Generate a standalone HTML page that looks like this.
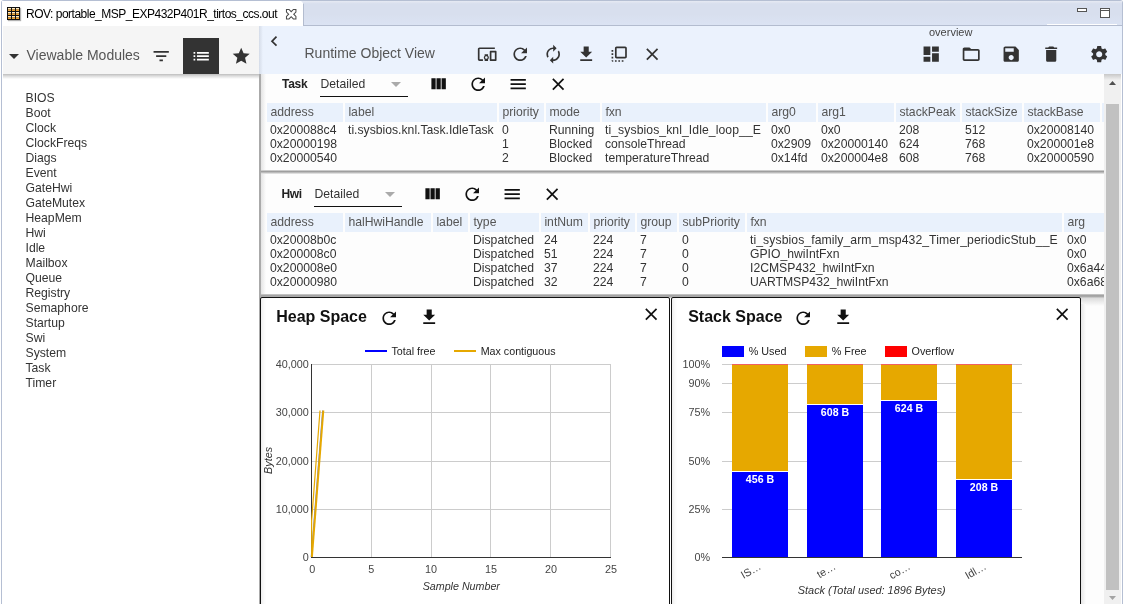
<!DOCTYPE html>
<html><head><meta charset="utf-8">
<style>
*{margin:0;padding:0;box-sizing:border-box}
html,body{width:1124px;height:604px;overflow:hidden;background:#fff;font-family:"Liberation Sans",sans-serif;color:#333}
.a{position:absolute}
.t{position:absolute;white-space:nowrap;line-height:1;-webkit-font-smoothing:antialiased}
body{filter:grayscale(0)}
svg{position:absolute;overflow:visible}
</style></head><body>
<div class="a" style="left:1px;top:0;width:1122px;height:604px;border-left:1px solid #b5bfd3;border-top:1px solid #b5bfd3;border-right:1px solid #b5bfd3;border-top-left-radius:3px;border-top-right-radius:3px"></div>
<div class="a" style="left:2px;top:1px;width:1120px;height:25px;background:linear-gradient(#e6eaf3,#d8dfee 12%,#d8dfee 55%,#dbe3f3);border-bottom:1px solid #b3bccf"></div>
<div class="a" style="left:1047px;top:24px;width:70px;height:1px;background:#fff"></div>
<div class="a" style="left:2px;top:1px;width:302px;height:25px;background:#fff;border-right:1px solid #b3bccf;clip-path:polygon(0 0,299px 0,302px 3px,302px 25px,0 25px)"></div>
<div class="a" style="left:7px;top:7px;width:13px;height:13px;background:#111;box-shadow:1px 1px 1px rgba(0,0,0,.3)"></div>
<svg style="left:7px;top:7px" width="13" height="13"><g><rect x="1" y="1" width="3" height="1.5" fill="#ffeec8"/><rect x="1" y="2.5" width="3" height="1.5" fill="#f3a633"/><rect x="5" y="1" width="3" height="1.5" fill="#ffeec8"/><rect x="5" y="2.5" width="3" height="1.5" fill="#f3a633"/><rect x="9" y="1" width="3" height="1.5" fill="#ffeec8"/><rect x="9" y="2.5" width="3" height="1.5" fill="#f3a633"/><rect x="1" y="5" width="3" height="1.5" fill="#ffeec8"/><rect x="1" y="6.5" width="3" height="1.5" fill="#f3a633"/><rect x="5" y="5" width="3" height="1.5" fill="#ffeec8"/><rect x="5" y="6.5" width="3" height="1.5" fill="#f3a633"/><rect x="9" y="5" width="3" height="1.5" fill="#ffeec8"/><rect x="9" y="6.5" width="3" height="1.5" fill="#f3a633"/><rect x="1" y="9" width="3" height="1.5" fill="#ffeec8"/><rect x="1" y="10.5" width="3" height="1.5" fill="#f3a633"/><rect x="5" y="9" width="3" height="1.5" fill="#ffeec8"/><rect x="5" y="10.5" width="3" height="1.5" fill="#f3a633"/><rect x="9" y="9" width="3" height="1.5" fill="#ffeec8"/><rect x="9" y="10.5" width="3" height="1.5" fill="#f3a633"/></g></svg>
<div class="t" style="left:26px;top:8.02px;font-size:12px;color:#000;font-weight:normal;font-style:normal;letter-spacing:-0.5px">ROV: portable_MSP_EXP432P401R_tirtos_ccs.out</div>
<svg style="left:285.8px;top:8.8px" width="10.4" height="10.4" viewBox="0 0 11 11"><path d="M0.5 0.5H3.2L5.5 2.8L7.8 0.5H10.5V3.2L8.2 5.5L10.5 7.8V10.5H7.8L5.5 8.2L3.2 10.5H0.5V7.8L2.8 5.5L0.5 3.2Z" fill="none" stroke="#4a4a4a" stroke-width="1.1"/></svg>
<div class="a" style="left:1077px;top:8px;width:10px;height:4px;border:1px solid #555;background:#fff"></div>
<div class="a" style="left:1100px;top:8px;width:10px;height:10px;border:1px solid #555;background:#fff"></div>
<div class="a" style="left:1101px;top:10px;width:8px;height:1px;background:#555"></div>
<div class="a" style="left:3px;top:26px;width:256px;height:48px;background:#f5f5f5"></div>
<div class="a" style="left:3px;top:74px;width:256px;height:5px;background:linear-gradient(#bdbdbd,#dcdcdc 40%,#fff)"></div>
<svg style="left:9px;top:54px" width="10" height="5"><path d="M0 0H10L5 5Z" fill="#333"/></svg>
<div class="t" style="left:26.5px;top:48.02px;font-size:14px;color:#555;font-weight:normal;font-style:normal;">Viewable Modules</div>
<svg style="left:150.80px;top:45.80px" width="20.4" height="20.4" viewBox="0 0 24 24"><path fill="#333" d="M10 18h4v-2h-4v2zM3 6v2h18V6H3zm3 7h12v-2H6v2z"/></svg>
<div class="a" style="left:183px;top:38px;width:36px;height:36px;background:#333"></div>
<svg style="left:190.80px;top:45.80px" width="20.4" height="20.4" viewBox="0 0 24 24"><path fill="#fff" d="M3 13h2v-2H3v2zm0 4h2v-2H3v2zm0-8h2V7H3v2zm4 4h14v-2H7v2zm0 4h14v-2H7v2zM7 7v2h14V7H7z"/></svg>
<svg style="left:230.80px;top:45.80px" width="20.4" height="20.4" viewBox="0 0 24 24"><path fill="#333" d="M12 17.27L18.18 21l-1.64-7.03L22 9.24l-7.19-.61L12 2 9.19 8.63 2 9.24l5.46 4.73L5.82 21z"/></svg>
<div class="t" style="left:25.5px;top:91.92px;font-size:12.2px;color:#333;font-weight:normal;font-style:normal;">BIOS</div>
<div class="t" style="left:25.5px;top:106.92px;font-size:12.2px;color:#333;font-weight:normal;font-style:normal;">Boot</div>
<div class="t" style="left:25.5px;top:121.92px;font-size:12.2px;color:#333;font-weight:normal;font-style:normal;">Clock</div>
<div class="t" style="left:25.5px;top:136.92px;font-size:12.2px;color:#333;font-weight:normal;font-style:normal;">ClockFreqs</div>
<div class="t" style="left:25.5px;top:151.92px;font-size:12.2px;color:#333;font-weight:normal;font-style:normal;">Diags</div>
<div class="t" style="left:25.5px;top:166.92px;font-size:12.2px;color:#333;font-weight:normal;font-style:normal;">Event</div>
<div class="t" style="left:25.5px;top:181.92px;font-size:12.2px;color:#333;font-weight:normal;font-style:normal;">GateHwi</div>
<div class="t" style="left:25.5px;top:196.92px;font-size:12.2px;color:#333;font-weight:normal;font-style:normal;">GateMutex</div>
<div class="t" style="left:25.5px;top:211.92px;font-size:12.2px;color:#333;font-weight:normal;font-style:normal;">HeapMem</div>
<div class="t" style="left:25.5px;top:226.92px;font-size:12.2px;color:#333;font-weight:normal;font-style:normal;">Hwi</div>
<div class="t" style="left:25.5px;top:241.92px;font-size:12.2px;color:#333;font-weight:normal;font-style:normal;">Idle</div>
<div class="t" style="left:25.5px;top:256.92px;font-size:12.2px;color:#333;font-weight:normal;font-style:normal;">Mailbox</div>
<div class="t" style="left:25.5px;top:271.92px;font-size:12.2px;color:#333;font-weight:normal;font-style:normal;">Queue</div>
<div class="t" style="left:25.5px;top:286.92px;font-size:12.2px;color:#333;font-weight:normal;font-style:normal;">Registry</div>
<div class="t" style="left:25.5px;top:301.92px;font-size:12.2px;color:#333;font-weight:normal;font-style:normal;">Semaphore</div>
<div class="t" style="left:25.5px;top:316.92px;font-size:12.2px;color:#333;font-weight:normal;font-style:normal;">Startup</div>
<div class="t" style="left:25.5px;top:331.92px;font-size:12.2px;color:#333;font-weight:normal;font-style:normal;">Swi</div>
<div class="t" style="left:25.5px;top:346.92px;font-size:12.2px;color:#333;font-weight:normal;font-style:normal;">System</div>
<div class="t" style="left:25.5px;top:361.92px;font-size:12.2px;color:#333;font-weight:normal;font-style:normal;">Task</div>
<div class="t" style="left:25.5px;top:376.92px;font-size:12.2px;color:#333;font-weight:normal;font-style:normal;">Timer</div>
<div class="a" style="left:259px;top:26px;width:863px;height:48px;background:#ebf2fd"></div>
<div class="a" style="left:259px;top:26px;width:4px;height:48px;background:linear-gradient(90deg,#d5dce8,#ebf2fd)"></div>
<div class="a" style="left:263px;top:74px;width:841px;height:530px;background:#fdfdfd"></div>
<div class="a" style="left:259px;top:74px;width:2px;height:530px;background:#aaa"></div>
<div class="a" style="left:261px;top:74px;width:5px;height:530px;background:linear-gradient(90deg,#e4e4e4,#fdfdfd)"></div>
<svg style="left:264.10px;top:31.00px" width="20.4" height="20.4" viewBox="0 0 24 24"><path fill="#333" d="M15.41 7.41L14 6l-6 6 6 6 1.41-1.41L10.83 12z"/></svg>
<div class="t" style="left:304.5px;top:46.02px;font-size:14px;color:#555;font-weight:normal;font-style:normal;">Runtime Object View</div>
<svg style="left:476.70px;top:43.70px" width="20.4" height="20.4" viewBox="0 0 24 24"><path fill="#333" d="M3 6h18V4H3c-1.1 0-2 .9-2 2v12c0 1.1.9 2 2 2h4v-2H3V6zm10 6H9v1.78c-.61.55-1 1.33-1 2.22s.39 1.67 1 2.22V20h4v-1.78c.61-.55 1-1.34 1-2.22s-.39-1.67-1-2.22V12zm-2 5.5c-.83 0-1.5-.67-1.5-1.5s.67-1.5 1.5-1.5 1.5.67 1.5 1.5-.67 1.5-1.5 1.5zM22 8h-6c-.5 0-1 .5-1 1v10c0 .5.5 1 1 1h6c.5 0 1-.5 1-1V9c0-.5-.5-1-1-1zm-1 10h-4v-8h4v8z"/></svg>
<svg style="left:509.80px;top:43.70px" width="20.4" height="20.4" viewBox="0 0 24 24"><path fill="#333" d="M17.65 6.35C16.2 4.9 14.21 4 12 4c-4.42 0-7.99 3.58-7.99 8s3.57 8 7.99 8c3.73 0 6.84-2.55 7.73-6h-2.08c-.82 2.33-3.04 4-5.65 4-3.31 0-6-2.69-6-6s2.69-6 6-6c1.66 0 3.14.69 4.22 1.78L13 11h7V4l-2.35 2.35z"/></svg>
<svg style="left:542.80px;top:43.70px" width="20.4" height="20.4" viewBox="0 0 24 24"><path fill="#333" d="M12 6v3l4-4-4-4v3c-4.42 0-8 3.58-8 8 0 1.57.46 3.03 1.24 4.26L6.7 14.8c-.45-.83-.7-1.79-.7-2.8 0-3.31 2.69-6 6-6zm6.76 1.74L17.3 9.2c.44.84.7 1.79.7 2.8 0 3.31-2.69 6-6 6v-3l-4 4 4 4v-3c4.42 0 8-3.58 8-8 0-1.57-.46-3.03-1.24-4.26z"/></svg>
<svg style="left:575.80px;top:43.70px" width="20.4" height="20.4" viewBox="0 0 24 24"><path fill="#333" d="M19 9h-4V3H9v6H5l7 7 7-7zM5 18v2h14v-2H5z"/></svg>
<svg style="left:608.80px;top:43.70px" width="20.4" height="20.4" viewBox="0 0 24 24"><path fill="#333" d="M3 13h2v-2H3v2zm0 4h2v-2H3v2zm2 4v-2H3c0 1.1.89 2 2 2zM3 9h2V7H3v2zm12 12h2v-2h-2v2zm4-18H9c-1.11 0-2 .9-2 2v10c0 1.1.89 2 2 2h10c1.1 0 2-.9 2-2V5c0-1.1-.9-2-2-2zm0 12H9V5h10v10zm-8 6h2v-2h-2v2zm-4 0h2v-2H7v2z"/></svg>
<svg style="left:641.70px;top:43.70px" width="20.4" height="20.4" viewBox="0 0 24 24"><path fill="#333" d="M19 6.41L17.59 5 12 10.59 6.41 5 5 6.41 10.59 12 5 17.59 6.41 19 12 13.41 17.59 19 19 17.59 13.41 12z"/></svg>
<div class="t" style="left:929px;top:26.52px;font-size:11px;color:#444;font-weight:normal;font-style:normal;">overview</div>
<svg style="left:920.80px;top:43.70px" width="20.4" height="20.4" viewBox="0 0 24 24"><path fill="#333" d="M3 13h8V3H3v10zm0 8h8v-6H3v6zm10 0h8V11h-8v10zm0-18v6h8V3h-8z"/></svg>
<svg style="left:960.50px;top:43.70px" width="20.4" height="20.4" viewBox="0 0 24 24"><path fill="#333" d="M20 6h-8l-2-2H4c-1.1 0-1.99.9-1.99 2L2 18c0 1.1.9 2 2 2h16c1.1 0 2-.9 2-2V8c0-1.1-.9-2-2-2zm0 12H4V8h16v10z"/></svg>
<svg style="left:1000.80px;top:43.70px" width="20.4" height="20.4" viewBox="0 0 24 24"><path fill="#333" d="M17 3H5c-1.11 0-2 .9-2 2v14c0 1.1.89 2 2 2h14c1.1 0 2-.9 2-2V7l-4-4zm-5 16c-1.66 0-3-1.34-3-3s1.34-3 3-3 3 1.34 3 3-1.34 3-3 3zm3-10H5V5h10v4z"/></svg>
<svg style="left:1040.90px;top:43.70px" width="20.4" height="20.4" viewBox="0 0 24 24"><path fill="#333" d="M6 19c0 1.1.9 2 2 2h8c1.1 0 2-.9 2-2V7H6v12zM19 4h-3.5l-1-1h-5l-1 1H5v2h14V4z"/></svg>
<svg style="left:1088.60px;top:43.70px" width="20.4" height="20.4" viewBox="0 0 24 24"><path fill="#333" d="M19.14 12.94c.04-.3.06-.61.06-.94 0-.32-.02-.64-.07-.94l2.03-1.58c.18-.14.23-.41.12-.61l-1.92-3.32c-.12-.22-.37-.29-.59-.22l-2.39.96c-.5-.38-1.03-.7-1.62-.94l-.36-2.54c-.04-.24-.24-.41-.48-.41h-3.84c-.24 0-.43.17-.47.41l-.36 2.54c-.59.24-1.13.57-1.62.94l-2.39-.96c-.22-.08-.47 0-.59.22L2.74 8.87c-.12.21-.08.47.12.61l2.03 1.58c-.05.3-.09.63-.09.94s.02.64.07.94l-2.03 1.58c-.18.14-.23.41-.12.61l1.92 3.32c.12.22.37.29.59.22l2.39-.96c.5.38 1.03.7 1.62.94l.36 2.54c.05.24.24.41.48.41h3.84c.24 0 .44-.17.47-.41l.36-2.54c.59-.24 1.13-.56 1.62-.94l2.39.96c.22.08.47 0 .59-.22l1.92-3.32c.12-.22.07-.47-.12-.61l-2.01-1.58zM12 15.6c-1.98 0-3.6-1.62-3.6-3.6s1.62-3.6 3.6-3.6 3.6 1.62 3.6 3.6-1.62 3.6-3.6 3.6z"/></svg>
<div class="a" style="left:261px;top:74px;width:843px;height:530px;overflow:hidden">
<div class="t" style="left:21px;top:4.02px;font-size:12px;color:#222;font-weight:bold;font-style:normal;letter-spacing:-0.3px">Task</div>
<div class="t" style="left:59.5px;top:3.92px;font-size:12.2px;color:#333;font-weight:normal;font-style:normal;">Detailed</div>
<svg style="left:130.39999999999998px;top:8px" width="10" height="5"><path d="M0 0H10L5 5Z" fill="#aaa"/></svg>
<div class="a" style="left:59px;top:21.5px;width:88px;height:1.3px;background:#111"></div>
<svg style="left:167.10px;top:-0.40px" width="20.4" height="20.4" viewBox="0 0 24 24"><path fill="#111" d="M10 18h5V5h-5v13zm-6 0h5V5H4v13zM16 5v13h5V5h-5z"/></svg>
<svg style="left:206.90px;top:-0.40px" width="20.4" height="20.4" viewBox="0 0 24 24"><path fill="#111" d="M17.65 6.35C16.2 4.9 14.21 4 12 4c-4.42 0-7.99 3.58-7.99 8s3.57 8 7.99 8c3.73 0 6.84-2.55 7.73-6h-2.08c-.82 2.33-3.04 4-5.65 4-3.31 0-6-2.69-6-6s2.69-6 6-6c1.66 0 3.14.69 4.22 1.78L13 11h7V4l-2.35 2.35z"/></svg>
<svg style="left:246.70px;top:-0.40px" width="20.4" height="20.4" viewBox="0 0 24 24"><path fill="#111" d="M3 18h18v-2H3v2zm0-5h18v-2H3v2zm0-7v2h18V6H3z"/></svg>
<svg style="left:286.70px;top:-0.40px" width="20.4" height="20.4" viewBox="0 0 24 24"><path fill="#111" d="M19 6.41L17.59 5 12 10.59 6.41 5 5 6.41 10.59 12 5 17.59 6.41 19 12 13.41 17.59 19 19 17.59 13.41 12z"/></svg>
<div class="a" style="left:6px;top:29px;width:76px;height:19px;background:#e9f1fc"></div>
<div class="t" style="left:9.399999999999977px;top:31.92px;font-size:12.2px;color:#555;font-weight:normal;font-style:normal;">address</div>
<div class="a" style="left:84px;top:29px;width:152px;height:19px;background:#e9f1fc"></div>
<div class="t" style="left:87.39999999999998px;top:31.92px;font-size:12.2px;color:#555;font-weight:normal;font-style:normal;">label</div>
<div class="a" style="left:238px;top:29px;width:45px;height:19px;background:#e9f1fc"></div>
<div class="t" style="left:241.39999999999998px;top:31.92px;font-size:12.2px;color:#555;font-weight:normal;font-style:normal;">priority</div>
<div class="a" style="left:285px;top:29px;width:54px;height:19px;background:#e9f1fc"></div>
<div class="t" style="left:288.4px;top:31.92px;font-size:12.2px;color:#555;font-weight:normal;font-style:normal;">mode</div>
<div class="a" style="left:341px;top:29px;width:164px;height:19px;background:#e9f1fc"></div>
<div class="t" style="left:344.4px;top:31.92px;font-size:12.2px;color:#555;font-weight:normal;font-style:normal;">fxn</div>
<div class="a" style="left:507px;top:29px;width:48px;height:19px;background:#e9f1fc"></div>
<div class="t" style="left:510.4px;top:31.92px;font-size:12.2px;color:#555;font-weight:normal;font-style:normal;">arg0</div>
<div class="a" style="left:557px;top:29px;width:76px;height:19px;background:#e9f1fc"></div>
<div class="t" style="left:560.4px;top:31.92px;font-size:12.2px;color:#555;font-weight:normal;font-style:normal;">arg1</div>
<div class="a" style="left:635px;top:29px;width:64px;height:19px;background:#e9f1fc"></div>
<div class="t" style="left:638.4px;top:31.92px;font-size:12.2px;color:#555;font-weight:normal;font-style:normal;">stackPeak</div>
<div class="a" style="left:701px;top:29px;width:60px;height:19px;background:#e9f1fc"></div>
<div class="t" style="left:704.4px;top:31.92px;font-size:12.2px;color:#555;font-weight:normal;font-style:normal;">stackSize</div>
<div class="a" style="left:763px;top:29px;width:76px;height:19px;background:#e9f1fc"></div>
<div class="t" style="left:766.4000000000001px;top:31.92px;font-size:12.2px;color:#555;font-weight:normal;font-style:normal;">stackBase</div>
<div class="a" style="left:841px;top:29px;width:58px;height:19px;background:#e9f1fc"></div>
<div class="t" style="left:844.4000000000001px;top:31.92px;font-size:12.2px;color:#555;font-weight:normal;font-style:normal;"></div>
<div class="t" style="left:9px;top:49.92px;font-size:12.2px;color:#333;font-weight:normal;font-style:normal;">0x200088c4</div>
<div class="t" style="left:87px;top:49.92px;font-size:12.2px;color:#333;font-weight:normal;font-style:normal;">ti.sysbios.knl.Task.IdleTask</div>
<div class="t" style="left:241px;top:49.92px;font-size:12.2px;color:#333;font-weight:normal;font-style:normal;">0</div>
<div class="t" style="left:288px;top:49.92px;font-size:12.2px;color:#333;font-weight:normal;font-style:normal;">Running</div>
<div class="t" style="left:344px;top:49.92px;font-size:12.2px;color:#333;font-weight:normal;font-style:normal;letter-spacing:0.08px">ti_sysbios_knl_Idle_loop__E</div>
<div class="t" style="left:510px;top:49.92px;font-size:12.2px;color:#333;font-weight:normal;font-style:normal;">0x0</div>
<div class="t" style="left:560px;top:49.92px;font-size:12.2px;color:#333;font-weight:normal;font-style:normal;">0x0</div>
<div class="t" style="left:638px;top:49.92px;font-size:12.2px;color:#333;font-weight:normal;font-style:normal;">208</div>
<div class="t" style="left:704px;top:49.92px;font-size:12.2px;color:#333;font-weight:normal;font-style:normal;">512</div>
<div class="t" style="left:766px;top:49.92px;font-size:12.2px;color:#333;font-weight:normal;font-style:normal;">0x20008140</div>
<div class="t" style="left:9px;top:63.92px;font-size:12.2px;color:#333;font-weight:normal;font-style:normal;">0x20000198</div>
<div class="t" style="left:241px;top:63.92px;font-size:12.2px;color:#333;font-weight:normal;font-style:normal;">1</div>
<div class="t" style="left:288px;top:63.92px;font-size:12.2px;color:#333;font-weight:normal;font-style:normal;">Blocked</div>
<div class="t" style="left:344px;top:63.92px;font-size:12.2px;color:#333;font-weight:normal;font-style:normal;">consoleThread</div>
<div class="t" style="left:510px;top:63.92px;font-size:12.2px;color:#333;font-weight:normal;font-style:normal;">0x2909</div>
<div class="t" style="left:560px;top:63.92px;font-size:12.2px;color:#333;font-weight:normal;font-style:normal;">0x20000140</div>
<div class="t" style="left:638px;top:63.92px;font-size:12.2px;color:#333;font-weight:normal;font-style:normal;">624</div>
<div class="t" style="left:704px;top:63.92px;font-size:12.2px;color:#333;font-weight:normal;font-style:normal;">768</div>
<div class="t" style="left:766px;top:63.92px;font-size:12.2px;color:#333;font-weight:normal;font-style:normal;">0x200001e8</div>
<div class="t" style="left:9px;top:77.92px;font-size:12.2px;color:#333;font-weight:normal;font-style:normal;">0x20000540</div>
<div class="t" style="left:241px;top:77.92px;font-size:12.2px;color:#333;font-weight:normal;font-style:normal;">2</div>
<div class="t" style="left:288px;top:77.92px;font-size:12.2px;color:#333;font-weight:normal;font-style:normal;">Blocked</div>
<div class="t" style="left:344px;top:77.92px;font-size:12.2px;color:#333;font-weight:normal;font-style:normal;">temperatureThread</div>
<div class="t" style="left:510px;top:77.92px;font-size:12.2px;color:#333;font-weight:normal;font-style:normal;">0x14fd</div>
<div class="t" style="left:560px;top:77.92px;font-size:12.2px;color:#333;font-weight:normal;font-style:normal;">0x200004e8</div>
<div class="t" style="left:638px;top:77.92px;font-size:12.2px;color:#333;font-weight:normal;font-style:normal;">608</div>
<div class="t" style="left:704px;top:77.92px;font-size:12.2px;color:#333;font-weight:normal;font-style:normal;">768</div>
<div class="t" style="left:766px;top:77.92px;font-size:12.2px;color:#333;font-weight:normal;font-style:normal;">0x20000590</div>
<div class="a" style="left:0px;top:96px;width:843px;height:4px;background:linear-gradient(#e0e0e0,#9a9a9a 40%,#b8b8b8 60%,#f0f0f0)"></div>
<div class="t" style="left:20.399999999999977px;top:114.02px;font-size:12px;color:#222;font-weight:bold;font-style:normal;letter-spacing:-0.3px">Hwi</div>
<div class="t" style="left:53.5px;top:113.92px;font-size:12.2px;color:#333;font-weight:normal;font-style:normal;">Detailed</div>
<svg style="left:124.39999999999998px;top:118px" width="10" height="5"><path d="M0 0H10L5 5Z" fill="#aaa"/></svg>
<div class="a" style="left:53px;top:131.5px;width:88px;height:1.3px;background:#111"></div>
<svg style="left:161.10px;top:109.60px" width="20.4" height="20.4" viewBox="0 0 24 24"><path fill="#111" d="M10 18h5V5h-5v13zm-6 0h5V5H4v13zM16 5v13h5V5h-5z"/></svg>
<svg style="left:200.90px;top:109.60px" width="20.4" height="20.4" viewBox="0 0 24 24"><path fill="#111" d="M17.65 6.35C16.2 4.9 14.21 4 12 4c-4.42 0-7.99 3.58-7.99 8s3.57 8 7.99 8c3.73 0 6.84-2.55 7.73-6h-2.08c-.82 2.33-3.04 4-5.65 4-3.31 0-6-2.69-6-6s2.69-6 6-6c1.66 0 3.14.69 4.22 1.78L13 11h7V4l-2.35 2.35z"/></svg>
<svg style="left:240.70px;top:109.60px" width="20.4" height="20.4" viewBox="0 0 24 24"><path fill="#111" d="M3 18h18v-2H3v2zm0-5h18v-2H3v2zm0-7v2h18V6H3z"/></svg>
<svg style="left:280.70px;top:109.60px" width="20.4" height="20.4" viewBox="0 0 24 24"><path fill="#111" d="M19 6.41L17.59 5 12 10.59 6.41 5 5 6.41 10.59 12 5 17.59 6.41 19 12 13.41 17.59 19 19 17.59 13.41 12z"/></svg>
<div class="a" style="left:6px;top:139px;width:76px;height:19px;background:#e9f1fc"></div>
<div class="t" style="left:9.399999999999977px;top:141.92px;font-size:12.2px;color:#555;font-weight:normal;font-style:normal;">address</div>
<div class="a" style="left:84px;top:139px;width:86px;height:19px;background:#e9f1fc"></div>
<div class="t" style="left:87.39999999999998px;top:141.92px;font-size:12.2px;color:#555;font-weight:normal;font-style:normal;">halHwiHandle</div>
<div class="a" style="left:172px;top:139px;width:35px;height:19px;background:#e9f1fc"></div>
<div class="t" style="left:175.39999999999998px;top:141.92px;font-size:12.2px;color:#555;font-weight:normal;font-style:normal;">label</div>
<div class="a" style="left:209px;top:139px;width:69px;height:19px;background:#e9f1fc"></div>
<div class="t" style="left:212.39999999999998px;top:141.92px;font-size:12.2px;color:#555;font-weight:normal;font-style:normal;">type</div>
<div class="a" style="left:280px;top:139px;width:47px;height:19px;background:#e9f1fc"></div>
<div class="t" style="left:283.4px;top:141.92px;font-size:12.2px;color:#555;font-weight:normal;font-style:normal;">intNum</div>
<div class="a" style="left:329px;top:139px;width:45px;height:19px;background:#e9f1fc"></div>
<div class="t" style="left:332.4px;top:141.92px;font-size:12.2px;color:#555;font-weight:normal;font-style:normal;">priority</div>
<div class="a" style="left:376px;top:139px;width:40px;height:19px;background:#e9f1fc"></div>
<div class="t" style="left:379.4px;top:141.92px;font-size:12.2px;color:#555;font-weight:normal;font-style:normal;">group</div>
<div class="a" style="left:418px;top:139px;width:66px;height:19px;background:#e9f1fc"></div>
<div class="t" style="left:421.4px;top:141.92px;font-size:12.2px;color:#555;font-weight:normal;font-style:normal;">subPriority</div>
<div class="a" style="left:486px;top:139px;width:315px;height:19px;background:#e9f1fc"></div>
<div class="t" style="left:489.4px;top:141.92px;font-size:12.2px;color:#555;font-weight:normal;font-style:normal;">fxn</div>
<div class="a" style="left:803px;top:139px;width:96px;height:19px;background:#e9f1fc"></div>
<div class="t" style="left:806.4000000000001px;top:141.92px;font-size:12.2px;color:#555;font-weight:normal;font-style:normal;">arg</div>
<div class="t" style="left:9px;top:159.92px;font-size:12.2px;color:#333;font-weight:normal;font-style:normal;">0x20008b0c</div>
<div class="t" style="left:212px;top:159.92px;font-size:12.2px;color:#333;font-weight:normal;font-style:normal;">Dispatched</div>
<div class="t" style="left:283px;top:159.92px;font-size:12.2px;color:#333;font-weight:normal;font-style:normal;">24</div>
<div class="t" style="left:332px;top:159.92px;font-size:12.2px;color:#333;font-weight:normal;font-style:normal;">224</div>
<div class="t" style="left:379px;top:159.92px;font-size:12.2px;color:#333;font-weight:normal;font-style:normal;">7</div>
<div class="t" style="left:421px;top:159.92px;font-size:12.2px;color:#333;font-weight:normal;font-style:normal;">0</div>
<div class="t" style="left:489px;top:159.92px;font-size:12.2px;color:#333;font-weight:normal;font-style:normal;letter-spacing:0.08px">ti_sysbios_family_arm_msp432_Timer_periodicStub__E</div>
<div class="t" style="left:806px;top:159.92px;font-size:12.2px;color:#333;font-weight:normal;font-style:normal;">0x0</div>
<div class="t" style="left:9px;top:173.92px;font-size:12.2px;color:#333;font-weight:normal;font-style:normal;">0x200008c0</div>
<div class="t" style="left:212px;top:173.92px;font-size:12.2px;color:#333;font-weight:normal;font-style:normal;">Dispatched</div>
<div class="t" style="left:283px;top:173.92px;font-size:12.2px;color:#333;font-weight:normal;font-style:normal;">51</div>
<div class="t" style="left:332px;top:173.92px;font-size:12.2px;color:#333;font-weight:normal;font-style:normal;">224</div>
<div class="t" style="left:379px;top:173.92px;font-size:12.2px;color:#333;font-weight:normal;font-style:normal;">7</div>
<div class="t" style="left:421px;top:173.92px;font-size:12.2px;color:#333;font-weight:normal;font-style:normal;">0</div>
<div class="t" style="left:489px;top:173.92px;font-size:12.2px;color:#333;font-weight:normal;font-style:normal;">GPIO_hwiIntFxn</div>
<div class="t" style="left:806px;top:173.92px;font-size:12.2px;color:#333;font-weight:normal;font-style:normal;">0x0</div>
<div class="t" style="left:9px;top:187.92px;font-size:12.2px;color:#333;font-weight:normal;font-style:normal;">0x200008e0</div>
<div class="t" style="left:212px;top:187.92px;font-size:12.2px;color:#333;font-weight:normal;font-style:normal;">Dispatched</div>
<div class="t" style="left:283px;top:187.92px;font-size:12.2px;color:#333;font-weight:normal;font-style:normal;">37</div>
<div class="t" style="left:332px;top:187.92px;font-size:12.2px;color:#333;font-weight:normal;font-style:normal;">224</div>
<div class="t" style="left:379px;top:187.92px;font-size:12.2px;color:#333;font-weight:normal;font-style:normal;">7</div>
<div class="t" style="left:421px;top:187.92px;font-size:12.2px;color:#333;font-weight:normal;font-style:normal;">0</div>
<div class="t" style="left:489px;top:187.92px;font-size:12.2px;color:#333;font-weight:normal;font-style:normal;">I2CMSP432_hwiIntFxn</div>
<div class="t" style="left:806px;top:187.92px;font-size:12.2px;color:#333;font-weight:normal;font-style:normal;">0x6a44c</div>
<div class="t" style="left:9px;top:201.92px;font-size:12.2px;color:#333;font-weight:normal;font-style:normal;">0x20000980</div>
<div class="t" style="left:212px;top:201.92px;font-size:12.2px;color:#333;font-weight:normal;font-style:normal;">Dispatched</div>
<div class="t" style="left:283px;top:201.92px;font-size:12.2px;color:#333;font-weight:normal;font-style:normal;">32</div>
<div class="t" style="left:332px;top:201.92px;font-size:12.2px;color:#333;font-weight:normal;font-style:normal;">224</div>
<div class="t" style="left:379px;top:201.92px;font-size:12.2px;color:#333;font-weight:normal;font-style:normal;">7</div>
<div class="t" style="left:421px;top:201.92px;font-size:12.2px;color:#333;font-weight:normal;font-style:normal;">0</div>
<div class="t" style="left:489px;top:201.92px;font-size:12.2px;color:#333;font-weight:normal;font-style:normal;">UARTMSP432_hwiIntFxn</div>
<div class="t" style="left:806px;top:201.92px;font-size:12.2px;color:#333;font-weight:normal;font-style:normal;">0x6a68c</div>
<div class="a" style="left:0px;top:220px;width:843px;height:3.5px;background:linear-gradient(#d0d0d0,#9a9a9a 45%,#b0b0b0 70%,#d8d8d8)"></div>
<div class="a" style="left:820px;top:223.5px;width:23px;height:8px;background:linear-gradient(#dcdcdc,#fdfdfd)"></div>
</div>
<div class="a" style="left:1104px;top:74px;width:17px;height:530px;background:#f0f0f0"></div>
<div class="a" style="left:1104px;top:74px;width:17px;height:6px;background:linear-gradient(#c8c8c8,#f0f0f0)"></div>
<div class="a" style="left:1106px;top:104px;width:13px;height:486px;background:#c1c1c1"></div>
<svg style="left:1109px;top:81px" width="7" height="4"><path d="M0 4H7L3.5 0Z" fill="#505050"/></svg>
<svg style="left:1109px;top:596px" width="7" height="4"><path d="M0 0H7L3.5 4Z" fill="#a3a3a3"/></svg>
<div class="a" style="left:260px;top:297px;width:410px;height:320px;border:1px solid #111;border-radius:2px;background:#fff;box-shadow:inset 4px 0 5px -3px rgba(0,0,0,.10)"></div>
<div class="a" style="left:671px;top:297px;width:410px;height:320px;border:1px solid #111;border-radius:2px;background:#fff;box-shadow:inset 4px 0 5px -3px rgba(0,0,0,.10)"></div>
<div class="a" style="left:1081px;top:304px;width:5px;height:300px;background:linear-gradient(90deg,#e6e6e6,#fdfdfd)"></div>
<div class="t" style="left:276.2px;top:308.52px;font-size:16px;color:#111;font-weight:bold;font-style:normal;">Heap Space</div>
<svg style="left:378.70px;top:307.80px" width="20.4" height="20.4" viewBox="0 0 24 24"><path fill="#111" d="M17.65 6.35C16.2 4.9 14.21 4 12 4c-4.42 0-7.99 3.58-7.99 8s3.57 8 7.99 8c3.73 0 6.84-2.55 7.73-6h-2.08c-.82 2.33-3.04 4-5.65 4-3.31 0-6-2.69-6-6s2.69-6 6-6c1.66 0 3.14.69 4.22 1.78L13 11h7V4l-2.35 2.35z"/></svg>
<svg style="left:418.80px;top:307.40px" width="20.4" height="20.4" viewBox="0 0 24 24"><path fill="#111" d="M19 9h-4V3H9v6H5l7 7 7-7zM5 18v2h14v-2H5z"/></svg>
<svg style="left:640.80px;top:303.70px" width="20.4" height="20.4" viewBox="0 0 24 24"><path fill="#111" d="M19 6.41L17.59 5 12 10.59 6.41 5 5 6.41 10.59 12 5 17.59 6.41 19 12 13.41 17.59 19 19 17.59 13.41 12z"/></svg>
<div class="t" style="left:688.2px;top:308.52px;font-size:16px;color:#111;font-weight:bold;font-style:normal;">Stack Space</div>
<svg style="left:792.90px;top:307.80px" width="20.4" height="20.4" viewBox="0 0 24 24"><path fill="#111" d="M17.65 6.35C16.2 4.9 14.21 4 12 4c-4.42 0-7.99 3.58-7.99 8s3.57 8 7.99 8c3.73 0 6.84-2.55 7.73-6h-2.08c-.82 2.33-3.04 4-5.65 4-3.31 0-6-2.69-6-6s2.69-6 6-6c1.66 0 3.14.69 4.22 1.78L13 11h7V4l-2.35 2.35z"/></svg>
<svg style="left:832.70px;top:307.20px" width="20.4" height="20.4" viewBox="0 0 24 24"><path fill="#111" d="M19 9h-4V3H9v6H5l7 7 7-7zM5 18v2h14v-2H5z"/></svg>
<svg style="left:1051.70px;top:304.10px" width="20.4" height="20.4" viewBox="0 0 24 24"><path fill="#111" d="M19 6.41L17.59 5 12 10.59 6.41 5 5 6.41 10.59 12 5 17.59 6.41 19 12 13.41 17.59 19 19 17.59 13.41 12z"/></svg>
<svg style="left:0;top:0" width="1124" height="604" viewBox="0 0 1124 604"><g shape-rendering="crispEdges"><rect x="312" y="364" width="299" height="1" fill="#ccc"/><rect x="312" y="412" width="299" height="1" fill="#ccc"/><rect x="312" y="461" width="299" height="1" fill="#ccc"/><rect x="312" y="509" width="299" height="1" fill="#ccc"/><rect x="371" y="364" width="1" height="193" fill="#ccc"/><rect x="431" y="364" width="1" height="193" fill="#ccc"/><rect x="490" y="364" width="1" height="193" fill="#ccc"/><rect x="550" y="364" width="1" height="193" fill="#ccc"/><rect x="610" y="364" width="1" height="193" fill="#ccc"/><rect x="311" y="364" width="1" height="194" fill="#333"/><rect x="311" y="557" width="300" height="1" fill="#333"/><rect x="722" y="364" width="300" height="1" fill="#ccc"/><rect x="722" y="383" width="300" height="1" fill="#ccc"/><rect x="722" y="412" width="300" height="1" fill="#ccc"/><rect x="722" y="461" width="300" height="1" fill="#ccc"/><rect x="722" y="509" width="300" height="1" fill="#ccc"/><rect x="722" y="557" width="300" height="1" fill="#333"/><rect x="722" y="346" width="22" height="11" fill="#0000ff"/><rect x="805" y="346" width="22" height="11" fill="#e6a800"/><rect x="885" y="346" width="22" height="11" fill="#ff0000"/><rect x="732" y="364" width="56" height="108" fill="#e6a800"/><rect x="732" y="364" width="56" height="1" fill="#f06060"/><rect x="732" y="472" width="56" height="85" fill="#0000ff"/><rect x="732" y="471" width="56" height="1" fill="#fff"/><rect x="807" y="364" width="56" height="41" fill="#e6a800"/><rect x="807" y="364" width="56" height="1" fill="#f06060"/><rect x="807" y="405" width="56" height="152" fill="#0000ff"/><rect x="807" y="404" width="56" height="1" fill="#fff"/><rect x="881" y="364" width="56" height="37" fill="#e6a800"/><rect x="881" y="364" width="56" height="1" fill="#f06060"/><rect x="881" y="401" width="56" height="156" fill="#0000ff"/><rect x="881" y="400" width="56" height="1" fill="#fff"/><rect x="956" y="364" width="56" height="116" fill="#e6a800"/><rect x="956" y="364" width="56" height="1" fill="#f06060"/><rect x="956" y="480" width="56" height="77" fill="#0000ff"/><rect x="956" y="479" width="56" height="1" fill="#fff"/><rect x="365" y="350" width="22" height="2" fill="#0000ff"/><rect x="454" y="350" width="22" height="2" fill="#e6a800"/></g><path d="M311.3 557 L322.7 410.5" stroke="#4060d0" stroke-width="1.2" fill="none" opacity=".8"/><path d="M311.9 557 L323.3 410.5" stroke="#e6a800" stroke-width="2" fill="none"/><path d="M320 410.5 L311.6 521 L311.8 557" stroke="#e6a800" stroke-width="1.2" fill="none"/></svg>
<div class="t" style="left:391.5px;top:345.67px;font-size:10.7px;color:#222;font-weight:normal;font-style:normal;">Total free</div>
<div class="t" style="left:480.7px;top:345.67px;font-size:10.7px;color:#222;font-weight:normal;font-style:normal;">Max contiguous</div>
<div class="t" style="right:815.2px;top:358.60px;font-size:10.8px;color:#444">40,000</div>
<div class="t" style="right:815.2px;top:406.60px;font-size:10.8px;color:#444">30,000</div>
<div class="t" style="right:815.2px;top:455.60px;font-size:10.8px;color:#444">20,000</div>
<div class="t" style="right:815.2px;top:503.60px;font-size:10.8px;color:#444">10,000</div>
<div class="t" style="right:815.2px;top:551.60px;font-size:10.8px;color:#444">0</div>
<div class="t" style="left:272.2px;width:80px;text-align:center;top:563.60px;font-size:10.8px;color:#444">0</div>
<div class="t" style="left:331.3px;width:80px;text-align:center;top:563.60px;font-size:10.8px;color:#444">5</div>
<div class="t" style="left:391.1px;width:80px;text-align:center;top:563.60px;font-size:10.8px;color:#444">10</div>
<div class="t" style="left:450.9px;width:80px;text-align:center;top:563.60px;font-size:10.8px;color:#444">15</div>
<div class="t" style="left:511px;width:80px;text-align:center;top:563.60px;font-size:10.8px;color:#444">20</div>
<div class="t" style="left:570.9px;width:80px;text-align:center;top:563.60px;font-size:10.8px;color:#444">25</div>
<div class="t" style="left:422.7px;top:580.67px;font-size:10.7px;color:#333;font-weight:normal;font-style:italic;">Sample Number</div>
<div class="t" style="left:228px;width:80px;text-align:center;top:455px;font-size:10.8px;font-style:italic;color:#333;transform:rotate(-90deg)">Bytes</div>
<div class="t" style="left:748.7px;top:345.62px;font-size:10.8px;color:#222;font-weight:normal;font-style:normal;">% Used</div>
<div class="t" style="left:831.7px;top:345.62px;font-size:10.8px;color:#222;font-weight:normal;font-style:normal;">% Free</div>
<div class="t" style="left:911.5px;top:345.62px;font-size:10.8px;color:#222;font-weight:normal;font-style:normal;">Overflow</div>
<div class="t" style="right:414px;top:358.60px;font-size:10.8px;color:#444">100%</div>
<div class="t" style="right:414px;top:377.60px;font-size:10.8px;color:#444">90%</div>
<div class="t" style="right:414px;top:406.60px;font-size:10.8px;color:#444">75%</div>
<div class="t" style="right:414px;top:455.60px;font-size:10.8px;color:#444">50%</div>
<div class="t" style="right:414px;top:503.60px;font-size:10.8px;color:#444">25%</div>
<div class="t" style="right:414px;top:551.60px;font-size:10.8px;color:#444">0%</div>
<div class="t" style="left:720px;width:80px;text-align:center;top:474.00px;font-size:10.6px;font-weight:bold;color:#fff">456 B</div>
<div class="t" style="left:795px;width:80px;text-align:center;top:407.00px;font-size:10.6px;font-weight:bold;color:#fff">608 B</div>
<div class="t" style="left:869px;width:80px;text-align:center;top:403.00px;font-size:10.6px;font-weight:bold;color:#fff">624 B</div>
<div class="t" style="left:944px;width:80px;text-align:center;top:482.00px;font-size:10.6px;font-weight:bold;color:#fff">208 B</div>
<div class="t" style="right:364.5px;top:560.00px;font-size:10.8px;color:#444;transform-origin:100% 50%;transform:rotate(-30deg)">IS…</div>
<div class="t" style="right:289.5px;top:560.00px;font-size:10.8px;color:#444;transform-origin:100% 50%;transform:rotate(-30deg)">te…</div>
<div class="t" style="right:215.20000000000005px;top:560.00px;font-size:10.8px;color:#444;transform-origin:100% 50%;transform:rotate(-30deg)">co…</div>
<div class="t" style="right:139.20000000000005px;top:560.00px;font-size:10.8px;color:#444;transform-origin:100% 50%;transform:rotate(-30deg)">Idl…</div>
<div class="t" style="left:797.8px;top:584.57px;font-size:10.9px;color:#333;font-weight:normal;font-style:italic;">Stack (Total used: 1896 Bytes)</div>
</body></html>
